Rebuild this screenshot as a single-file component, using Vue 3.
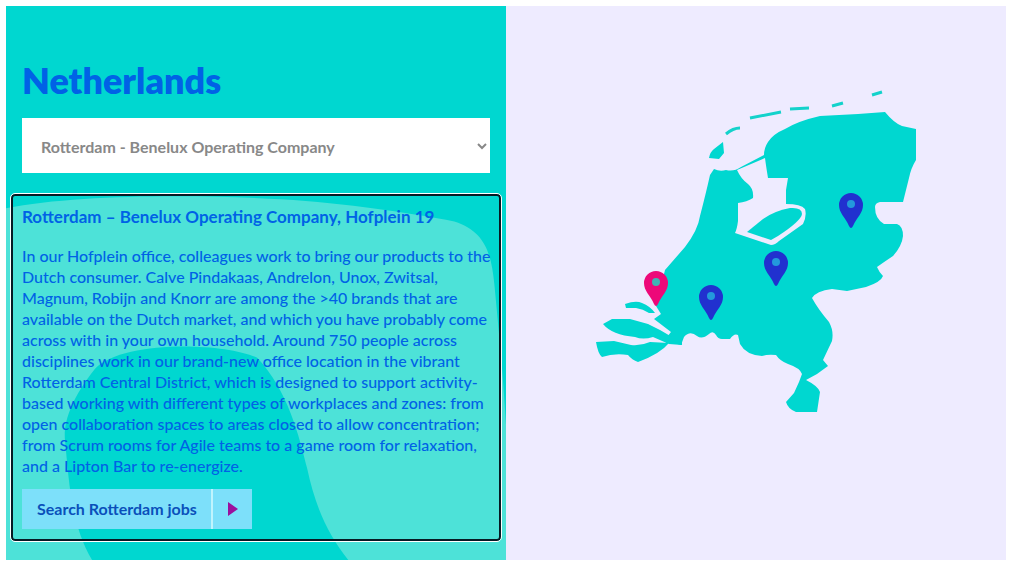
<script setup>
import { ref } from 'vue'

const offices = ['Rotterdam - Benelux Operating Company']
const selected = ref(offices[0])

const paragraph = [
  'In our Hofplein office, colleagues work to bring our products to the',
  'Dutch consumer. Calve Pindakaas, Andrelon, Unox, Zwitsal,',
  'Magnum, Robijn and Knorr are among the >40 brands that are',
  'available on the Dutch market, and which you have probably come',
  'across with in your own household. Around 750 people across',
  'disciplines work in our brand-new office location in the vibrant',
  'Rotterdam Central District, which is designed to support activity-',
  'based working with different types of workplaces and zones: from',
  'open collaboration spaces to areas closed to allow concentration;',
  'from Scrum rooms for Agile teams to a game room for relaxation,',
  'and a Lipton Bar to re-energize.',
]

// Tip of each pin in map units; the map is 332 x 336.
const pins = [
  { name: 'Rotterdam', x: 66, y: 223, active: true },
  { name: 'Office 2', x: 121, y: 237 },
  { name: 'Office 3', x: 186, y: 203 },
  { name: 'Office 4', x: 261, y: 145 },
]
const place = (p) => ({ left: (p.x / 332) * 100 + '%', top: (p.y / 336) * 100 + '%' })
</script>

<template>
  <main class="page">
    <section class="info">
      <svg class="backdrop" viewBox="0 0 500 553" preserveAspectRatio="none" aria-hidden="true">
        <path class="wave" d="M0 202C70 188 190 188 275 193C340 197 405 207 448 215C480 225 485 249 488 278C492 320 497 370 500 425V553H342C322 528 309 500 301 462C293 430 282 384 251 351C215 335 115 334 89 362C65 392 57 416 59 434C63 475 65 518 86 553H0Z" />
      </svg>
      <h1>Netherlands</h1>
      <div class="picker">
        <select v-model="selected" aria-label="Office location">
          <option v-for="o in offices" :key="o">{{ o }}</option>
        </select>
        <svg class="chevron" viewBox="0 0 12 8" aria-hidden="true"><path d="M2 2L6 6L10 2" /></svg>
      </div>
      <article class="office" tabindex="0">
        <h2>Rotterdam – Benelux Operating Company, Hofplein 19</h2>
        <p><template v-for="(line, i) in paragraph" :key="i">{{ line }}<br v-if="i < paragraph.length - 1" /></template></p>
        <a class="search" href="#">
          <span class="label">Search Rotterdam jobs</span>
          <span class="arrow"><svg viewBox="0 0 12 14" aria-hidden="true"><path d="M1 0L11 7L1 14Z" /></svg></span>
        </a>
      </article>
    </section>
    <section class="map-pane">
      <div class="map">
        <svg class="country" viewBox="590 84 332 336" aria-hidden="true">
          <path class="land" fill-rule="evenodd" d="M714 169Q720 172 726 170Q734 172 741 167L764 155Q764 148 768 142Q773 134 785 129Q798 121 820 116L858 114L885 112Q894 123 902 126L916 129V160Q911 168 909 178L903 202H880Q875 203 875 207Q875 219 884 224H897Q903 226 903 236Q902 246 893 256Q884 262 877 267Q879 272 883 276Q881 282 866 287L847 291L832 289Q816 291 812 298Q818 309 829 322Q834 331 832 341L823 360L828 366L817 374L806 380Q818 386 820 392L817 412H796Q788 409 786 402L794 393L799 382L802 374Q800 368 788 364Q780 361 776 355Q768 354 762 356Q746 355 740 344L738 335Q734 333 730 339H722Q718 339 716 335Q713 330 709 334Q702 340 697 336Q690 330 684 337L681 345L670 342L655 336L667 337L671 332L654 319L661 314L656 306L665 270L685 247Q698 230 700 216Q706 193 710 175Z M737 170Q741 179 748 184Q754 189 753 198Q747 202 738 203V221Q737 229 735 233L771 245Q775 245 779 241L803 224Q807 216 805 209Q801 204 786 204V190L788 178H768Q766 166 765 158Z" />
          <path class="land" d="M747 232L763 219Q774 211 790 208Q802 207 802 214Q801 221 778 236L771 240Z" />
          <path class="land" d="M709 158Q710 152 714 149L723 142L724 153L719 159Z M625 304Q636 300 642 303Q650 306 655 313L649 313Q643 309 636 308L626 308Z M603 324L612 319H630L648 324L660 330L672 337L682 337V345L669 344L653 337Q643 340 635 337Q612 335 603 324Z M596 342L614 341L631 345Q641 346 650 342L669 343Q660 354 638 362Q632 360 628 355Q614 353 602 357Q598 354 596 342Z" />
          <path class="island" d="M726 134Q733 128 740 128M750 118L781 112M790 109L809 108M832 106L843 103M872 95L882 92" />
        </svg>
        <button v-for="p in pins" :key="p.name" type="button" class="pin" :class="{ active: p.active }" :style="place(p)" :aria-label="p.name">
          <svg viewBox="0 0 24 36" aria-hidden="true">
            <path d="M12 0A12 12 0 0 0 0 12C0 20 6 24 10 33Q12 37 14 33C18 24 24 20 24 12A12 12 0 0 0 12 0Z" />
            <circle cx="12" cy="11" r="4" />
          </svg>
        </button>
      </div>
    </section>
  </main>
</template>

<style>
body {
  margin: 0;
  background: #fff;
}
</style>

<style scoped>
* {
  box-sizing: border-box;
}
.page {
  display: grid;
  grid-template-columns: 1fr 1fr;
  padding: 6px 7px 7px 6px;
  font-family: Lato, "Open Sans", sans-serif;
  color: #0062e6;
}
.info {
  position: relative;
  padding: 54px 5px 19px;
  background: #00d7d0;
}
.backdrop {
  position: absolute;
  inset: 0;
  width: 100%;
  height: 100%;
}
.wave {
  fill: #4de2d8;
}
h1 {
  position: relative;
  margin: 0 11px 18px;
  font-size: 36px;
  line-height: 40px;
  font-weight: 800;
}
.picker {
  position: relative;
  margin: 0 11px 21px;
}
select {
  display: block;
  width: 100%;
  height: 55px;
  padding: 2px 19px 0;
  border: 0;
  border-radius: 0;
  appearance: none;
  background: #fff;
  color: #888;
  font-family: inherit;
  font-size: 16px;
  font-weight: 700;
}
.chevron {
  position: absolute;
  right: 2px;
  top: 24px;
  width: 12px;
  height: 8px;
  fill: none;
  stroke: #888;
  stroke-width: 2;
}
.office {
  position: relative;
  padding: 10px 9px;
  border: 2px solid #061a24;
  border-radius: 4px;
  outline: 1px solid #fff;
}
h2 {
  margin: 0 0 18px;
  font-size: 17px;
  line-height: 21px;
  font-weight: 700;
  white-space: nowrap;
}
p {
  margin: 0 0 13px;
  font-size: 16px;
  line-height: 21px;
  font-weight: 500;
  white-space: nowrap;
}
.search {
  display: inline-flex;
  vertical-align: top;
  height: 40px;
  background: #7de0fa;
  color: #0a50ba;
  font-size: 16px;
  font-weight: 700;
  line-height: 40px;
  text-decoration: none;
  white-space: nowrap;
}
.label {
  width: 191px;
  padding-left: 15px;
  border-right: 2px solid #c0f4fd;
}
.arrow {
  display: flex;
  align-items: center;
  justify-content: center;
  width: 39px;
}
.arrow svg {
  width: 12px;
  height: 14px;
  fill: #9b109d;
}
.map-pane {
  padding-top: 78px;
  background: #eeebff;
}
.map {
  position: relative;
  width: 332px;
  margin: 0 auto;
}
.country {
  display: block;
  width: 100%;
}
.land {
  fill: #00d7d0;
}
.island {
  fill: none;
  stroke: #13d2cb;
  stroke-width: 3;
}
.pin {
  position: absolute;
  width: 24px;
  height: 36px;
  padding: 0;
  border: 0;
  background: none;
  transform: translate(-50%, -100%);
}
.pin svg {
  display: block;
  width: 100%;
  height: 100%;
  fill: #2131cf;
}
.pin circle {
  fill: #2399dc;
}
.pin.active svg {
  fill: #ed0879;
}
.pin.active circle {
  fill: #40b3b5;
}
</style>
